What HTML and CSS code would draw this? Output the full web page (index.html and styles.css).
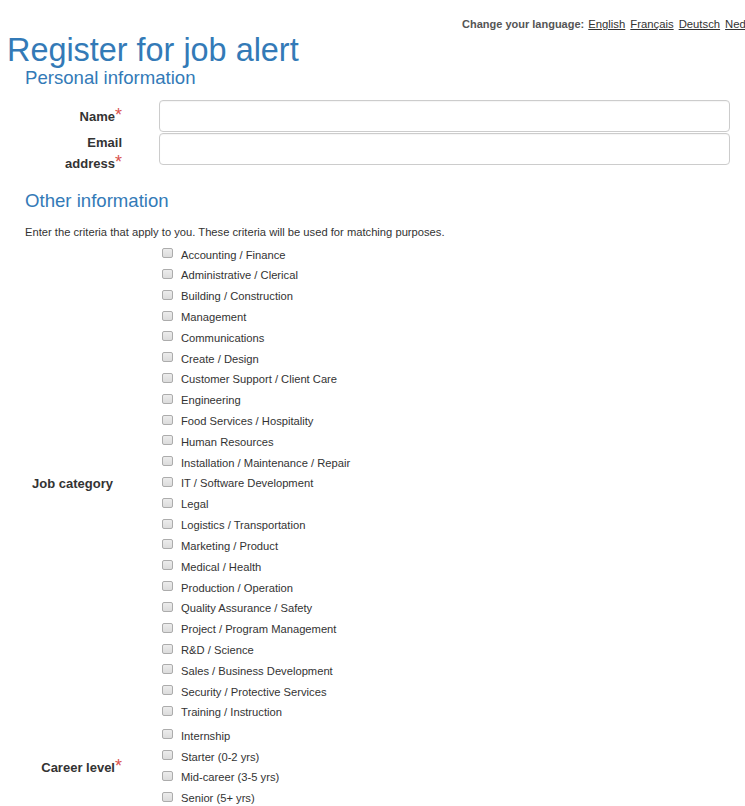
FILE: index.html
```html
<!DOCTYPE html>
<html lang="en">
<head>
    <meta charset="UTF-8">
    <title>Register for job alert</title>
    <link rel="stylesheet" href="styles.css">
</head>
<body>
    <div class="lang">
        <span class="lang-label">Change your language:</span>
        <a href="#">English</a>
        <a href="#">Français</a>
        <a href="#">Deutsch</a>
        <a href="#">Nederlands</a>
    </div>

    <h1 class="title">Register for job alert</h1>

    <div class="section">
        <h2 class="sub">Personal information</h2>

        <div class="row row-mid">
            <label class="lbl" for="name">Name<span class="req">*</span></label>
            <div class="field"><input type="text" id="name" class="tx"></div>
        </div>

        <div class="row row-top">
            <label class="lbl" for="email">Email address<span class="req">*</span></label>
            <div class="field"><input type="text" id="email" class="tx"></div>
        </div>

        <h2 class="sub other">Other information</h2>
        <p class="intro">Enter the criteria that apply to you. These criteria will be used for matching purposes.</p>

        <div class="row row-mid">
            <div class="lbl lbl-plain">Job category</div>
            <div class="checks">
                <label class="chk"><input type="checkbox"><span>Accounting / Finance</span></label>
                <label class="chk"><input type="checkbox"><span>Administrative / Clerical</span></label>
                <label class="chk"><input type="checkbox"><span>Building / Construction</span></label>
                <label class="chk"><input type="checkbox"><span>Management</span></label>
                <label class="chk"><input type="checkbox"><span>Communications</span></label>
                <label class="chk"><input type="checkbox"><span>Create / Design</span></label>
                <label class="chk"><input type="checkbox"><span>Customer Support / Client Care</span></label>
                <label class="chk"><input type="checkbox"><span>Engineering</span></label>
                <label class="chk"><input type="checkbox"><span>Food Services / Hospitality</span></label>
                <label class="chk"><input type="checkbox"><span>Human Resources</span></label>
                <label class="chk"><input type="checkbox"><span>Installation / Maintenance / Repair</span></label>
                <label class="chk"><input type="checkbox"><span>IT / Software Development</span></label>
                <label class="chk"><input type="checkbox"><span>Legal</span></label>
                <label class="chk"><input type="checkbox"><span>Logistics / Transportation</span></label>
                <label class="chk"><input type="checkbox"><span>Marketing / Product</span></label>
                <label class="chk"><input type="checkbox"><span>Medical / Health</span></label>
                <label class="chk"><input type="checkbox"><span>Production / Operation</span></label>
                <label class="chk"><input type="checkbox"><span>Quality Assurance / Safety</span></label>
                <label class="chk"><input type="checkbox"><span>Project / Program Management</span></label>
                <label class="chk"><input type="checkbox"><span>R&amp;D / Science</span></label>
                <label class="chk"><input type="checkbox"><span>Sales / Business Development</span></label>
                <label class="chk"><input type="checkbox"><span>Security / Protective Services</span></label>
                <label class="chk"><input type="checkbox"><span>Training / Instruction</span></label>
            </div>
        </div>

        <div class="row row-mid">
            <div class="lbl">Career level<span class="req">*</span></div>
            <div class="checks">
                <label class="chk"><input type="checkbox"><span>Internship</span></label>
                <label class="chk"><input type="checkbox"><span>Starter (0-2 yrs)</span></label>
                <label class="chk"><input type="checkbox"><span>Mid-career (3-5 yrs)</span></label>
                <label class="chk"><input type="checkbox"><span>Senior (5+ yrs)</span></label>
            </div>
        </div>
    </div>
</body>
</html>
```

FILE: styles.css
```css
* { margin: 0; padding: 0; box-sizing: border-box; }

html, body { overflow: hidden; }

body {
    font-family: "Liberation Sans", Arial, sans-serif;
    color: #333;
    background: #fff;
}

/* language switch, runs off the right edge */
.lang {
    display: flex;
    gap: 5px;
    padding: 17px 0 0 462px;
    font-size: 11px;
    line-height: 15px;
    white-space: nowrap;
}
.lang-label { font-weight: bold; color: #555; margin-right: -1px; }
.lang a { color: #333; font-size: 11.3px; }

.title {
    margin-left: 7px;
    font-size: 32.4px;
    font-weight: normal;
    line-height: 36.2px;
    color: #337ab7;
}

.section { padding: 0 15px 0 25px; }

.sub {
    font-size: 18.6px;
    font-weight: normal;
    line-height: 20.5px;
    color: #337ab7;
}
.sub.other { margin-top: 17px; }

/* form rows */
.row {
    display: grid;
    grid-template-columns: 97px 571px;
    column-gap: 37px;
}
.row-mid { align-items: center; }
.row-top { align-items: start; }
.section > .sub + .row { margin-top: 11.5px; }
.intro + .row { margin-top: 2px; }
.row:last-child { margin-top: 2.5px; }

.lbl {
    padding-left: 5px;
    text-align: right;
    font-size: 13px;
    font-weight: bold;
    line-height: 21px;
    color: #333;
}
.lbl-plain { padding-right: 9px; }

.req {
    color: #d9534f;
    font-size: 18px;
    line-height: 0;
    font-weight: normal;
}

.tx {
    display: block;
    width: 100%;
    height: 32px;
    border: 1px solid #ccc;
    border-radius: 4px;
    background: #fff;
    box-shadow: inset 0 1px 1px rgba(0, 0, 0, 0.04);
}
.row-top .tx { margin-top: 1px; }

.intro {
    margin-top: 10px;
    font-size: 11.2px;
    line-height: 20.8px;
}

/* checkbox lists */
.checks { padding-left: 3px; }

.chk {
    display: flex;
    align-items: flex-start;
    gap: 8px;
    font-size: 11.2px;
    line-height: 20.82px;
    color: #333;
}
.chk input {
    appearance: none;
    -webkit-appearance: none;
    flex: none;
    width: 11px;
    height: 10px;
    margin-top: 3.6px;
    border: 1px solid #acacac;
    border-radius: 2px;
    background: linear-gradient(#ececec, #dcdcdc);
}
```
